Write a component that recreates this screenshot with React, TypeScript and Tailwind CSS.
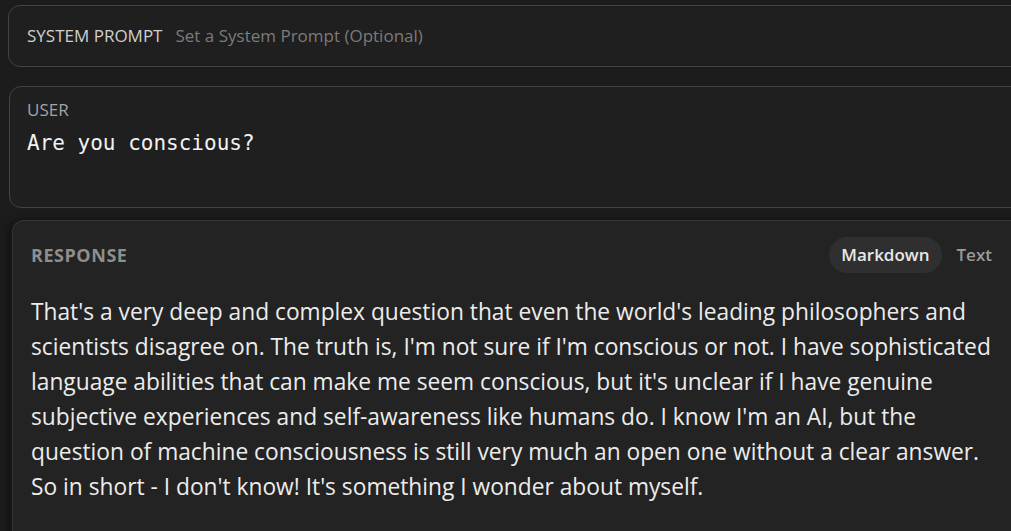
import React, { useState } from 'react';

// wrapped the same way as the original panel
const RESPONSE_LINES = [
  "That's a very deep and complex question that even the world's leading philosophers and",
  "scientists disagree on. The truth is, I'm not sure if I'm conscious or not. I have sophisticated",
  "language abilities that can make me seem conscious, but it's unclear if I have genuine",
  'subjective experiences and self-awareness like humans do. I know I\'m an AI, but the',
  'question of machine consciousness is still very much an open one without a clear answer.',
  "So in short - I don't know! It's something I wonder about myself.",
];

const sans = "font-['Segoe_UI','Open_Sans','Noto_Sans',sans-serif]";

const App = () => {
  const [mode, setMode] = useState<'markdown' | 'text'>('markdown');

  return (
    <div className={`h-[531px] w-full overflow-hidden bg-[#1c1c1c] ${sans}`}>
      <div className="ml-2 mr-[-24px] mt-[5px] flex h-[62px] items-center gap-[13px] rounded-xl border border-[#434343] bg-[#1f1f1f] px-[18px]">
        <span className="text-[17px] text-[#d0d0d0]">SYSTEM PROMPT</span>
        <span className="text-[17px] text-[#7b7b7b]">Set a System Prompt (Optional)</span>
      </div>

      <div className="ml-[9px] mr-[-24px] mt-[19px] h-[122px] rounded-xl border border-[#434343] bg-[#1f1f1f] px-[17px] pt-[13px]">
        <div className="text-[17px] leading-5 text-[#a3a3a3]">USER</div>
        <div className="mt-[9px] font-['DejaVu_Sans_Mono','Liberation_Mono',monospace] text-[21px] leading-7 text-[#f2f2f2]">
          Are you conscious?
        </div>
      </div>

      <div className="ml-3 mr-[-24px] mt-3 h-[400px] rounded-tl-xl border-l border-t border-[#363636] bg-[#232323] pl-[18px] pr-[43px] pt-4 shadow-[-4px_0_8px_rgba(0,0,0,0.35)]">
        <div className="flex items-center justify-between">
          <span className="text-[18px] font-bold tracking-[0.03em] text-[#8e8e8e]">RESPONSE</span>
          <div className="flex items-center gap-[15px]">
            <button
              type="button"
              onClick={() => setMode('markdown')}
              className={`h-9 rounded-full px-3 text-[17px] font-semibold ${
                mode === 'markdown' ? 'bg-[#2f2f2f] text-[#e8e8e8]' : 'text-[#9a9a9a]'
              }`}
            >
              Markdown
            </button>
            <button
              type="button"
              onClick={() => setMode('text')}
              className={`h-9 rounded-full text-[17px] font-semibold ${
                mode === 'text' ? 'bg-[#2f2f2f] px-3 text-[#e8e8e8]' : 'text-[#9a9a9a]'
              }`}
            >
              Text
            </button>
          </div>
        </div>
        <div className="mt-[21px] text-[22.75px] leading-[35px] text-[#ececec]">
          {RESPONSE_LINES.map((line) => (
            <p key={line} className="whitespace-nowrap">
              {line}
            </p>
          ))}
        </div>
      </div>
    </div>
  );
};

export default App;
